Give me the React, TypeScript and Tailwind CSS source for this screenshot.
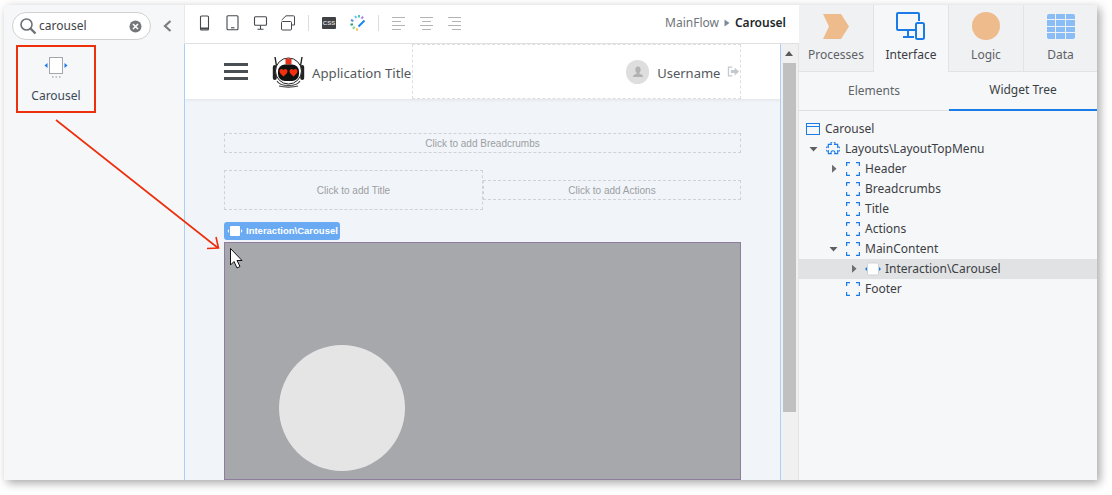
import React from "react";

const BLUE = "#1b7ce8";

function CarouselIcon() {
  return (
    <svg width="26" height="26" viewBox="0 0 26 26">
      <rect x="6.500" y="3.500" width="13" height="16" fill="#fff" stroke="#a3a7ab" />
      <path d="M4.500 9v5L1.500 11.500zM21.500 9v5l3-2.500z" fill={BLUE} />
      <path d="M9 23h1.500M12.500 23H14M16 23h1.500" stroke="#8d9195" strokeWidth="1" />
    </svg>
  );
}

function DashedIcon() {
  return (
    <svg width="14" height="14" viewBox="0 0 14 14" fill="none" stroke={BLUE} strokeWidth="1.200">
      <path d="M.6 4V.6H4M10 .6h3.400V4M.6 10v3.400H4M10 13.400h3.400V10" />
    </svg>
  );
}

function Caret({ open }: { open?: boolean }) {
  return open ? (
    <svg width="10" height="10" viewBox="0 0 10 10"><path d="M.5 3h8L4.500 7.500z" fill="#5f5f5f" /></svg>
  ) : (
    <svg width="10" height="10" viewBox="0 0 10 10"><path d="M3 .8v8L7.500 4.800z" fill="#6e6e6e" /></svg>
  );
}

function TreeRow({ pad, caret, icon, label, active, noCaret }: { pad: string; caret?: "open" | "closed"; icon: React.ReactNode; label: string; active?: boolean; noCaret?: boolean }) {
  return (
    <div className={`flex h-5 items-center text-[12px] text-[#3c4043] ${pad} ${active ? "bg-[#e1e2e4]" : ""}`}>
      {!noCaret && (
        <span className="flex w-5 justify-center pr-[5px]">{caret && <Caret open={caret === "open"} />}</span>
      )}
      <span className="flex w-[14px] items-center justify-center">{icon}</span>
      <span className="ml-[5px] whitespace-nowrap">{label}</span>
    </div>
  );
}

function Placeholder({ text, className }: { text: string; className: string }) {
  return (
    <div className={`flex items-center justify-center border border-dashed border-[#cfd3d6] font-['Liberation_Sans',sans-serif] text-[10px] text-[#9b9ea1] ${className}`}>
      {text}
    </div>
  );
}

function TopTab({ label, active, icon, last }: { label: string; active?: boolean; icon: React.ReactNode; last?: boolean }) {
  return (
    <div className={`flex flex-col items-center border-[#e2e3e5] ${last ? "flex-1" : "w-[75px] border-r"} ${active ? "bg-[#f6f7f9] text-[#3c3c44]" : "border-b bg-[#f0f1f3] text-[#5d6166]"}`}>
      <div className="flex h-[42px] items-center justify-center">{icon}</div>
      <div className="text-[12px] leading-[16px]">{label}</div>
    </div>
  );
}

function AlignIcon({ kind }: { kind: "left" | "center" | "right" }) {
  const d = {
    left: "M0 .5h13M0 4.500h9M0 8.500h13M0 12.500h9",
    center: "M0 .5h13M2 4.500h9M0 8.500h13M2 12.500h9",
    right: "M0 .5h13M4 4.500h9M0 8.500h13M4 12.500h9",
  }[kind];
  return (
    <svg width="13" height="13" viewBox="0 0 13 13"><path d={d} stroke="#b3b3b3" /></svg>
  );
}

function Toolbar() {
  return (
    <div className="flex h-[39px] shrink-0 items-center border-b border-l border-b-[#e0e0e0] border-l-[#e6e8ea] bg-white pb-[2px] pl-[12px] pr-[13px]">
      <div className="flex items-center gap-[13px]">
        <svg width="15" height="16" viewBox="0 0 15 16" fill="none" stroke="#45484c" strokeWidth="1.100">
          <rect x="3.500" y="1" width="8" height="14" rx="1" />
          <path d="M4 13.500h7" strokeWidth="2" />
        </svg>
        <svg width="15" height="16" viewBox="0 0 15 16" fill="none" stroke="#45484c" strokeWidth="1.100">
          <rect x="2" y=".8" width="11" height="14" rx="1" />
          <path d="M6 12.800h3.500" />
        </svg>
        <svg width="15" height="16" viewBox="0 0 15 16" fill="none" stroke="#45484c" strokeWidth="1.100">
          <rect x="1.500" y="1.800" width="12" height="8.500" rx="1" />
          <path d="M7.500 10.500V14M4.500 14.300h6" />
        </svg>
        <svg width="15" height="16" viewBox="0 0 15 16" fill="none" stroke="#45484c" strokeWidth="1">
          <rect x=".5" y="6.500" width="10" height="8.500" rx="1" />
          <path d="M.7 5 5 .8h7.500a1 1 0 0 1 1 1V10H11" />
        </svg>
      </div>
      <div className="ml-[12px] h-[16px] w-px bg-[#dcdcdc]" />
      <div className="ml-[13px] flex h-[12px] w-[14px] items-center justify-center rounded-[1px] bg-[#3f4144] font-['Liberation_Sans',sans-serif] text-[6px] font-bold text-[#d8d8d8]">
        CSS
      </div>
      <svg width="16" height="16" viewBox="0 0 16 16" className="ml-[14px]" fill="none" strokeWidth="2.600">
        <path d="M5 2.500 6.500 1.500" stroke="#58c2e8" />
        <path d="M8 1.300h2" stroke="#4fc6c0" />
        <path d="M11.500 2 13 3.200" stroke="#a684dc" />
        <path d="M2.500 4.500 1.800 6.500" stroke="#5f8fe0" />
        <path d="M1.500 8.500 2 10.500" stroke="#2aa06a" />
        <path d="M3 12 4.500 13.500" stroke="#8fd48a" />
        <path d="M6 14.500H8" stroke="#f0cd5c" />
        <path d="M8.500 11.500 14.500 5.500" stroke="#1b86ee" strokeWidth="2" />
      </svg>
      <div className="ml-[12px] h-[16px] w-px bg-[#dcdcdc]" />
      <div className="ml-[13px] flex items-center gap-[15px]">
        <AlignIcon kind="left" />
        <AlignIcon kind="center" />
        <AlignIcon kind="right" />
      </div>
      <div className="ml-auto flex items-center text-[12px]">
        <span className="text-[#6f7479]">MainFlow</span>
        <svg width="6" height="8" viewBox="0 0 6 8" className="mx-[5px]"><path d="M.5.5v7L5.500 4z" fill="#7d8a96" /></svg>
        <span className="font-semibold text-[#22262b]">Carousel</span>
      </div>
    </div>
  );
}

function RobotLogo() {
  return (
    <svg width="33" height="32" viewBox="0 0 33 32" className="ml-6">
      <path d="M4.500 10 3 1M28.500 10 30 1" stroke="#222" strokeWidth="1.400" />
      <rect x=".8" y="9" width="4" height="15" rx="2" fill="#222" />
      <rect x="28.200" y="9" width="4" height="15" rx="2" fill="#222" />
      <circle cx="16.500" cy="15" r="13" fill="#fff" stroke="#222" strokeWidth="1" />
      <rect x="13.500" y="2.500" width="6" height="6" fill="#e2311d" />
      <rect x="6" y="8.500" width="21" height="16.500" rx="7" fill="#111" />
      <path d="M11.500 14c-1.100-1.700-4-1.100-4 1.200 0 2.100 2.300 3.300 4 5.300 1.700-2 4-3.200 4-5.300 0-2.300-2.900-2.900-4-1.200zM21.500 14c-1.100-1.700-4-1.100-4 1.200 0 2.100 2.300 3.300 4 5.300 1.700-2 4-3.200 4-5.300 0-2.300-2.900-2.900-4-1.200z" fill="#f4300f" />
      <path d="M5 25c3 6 20 6 23 0M7 30c5 1.500 14 1.500 19 0" stroke="#444" strokeWidth="1.100" fill="none" />
    </svg>
  );
}

function AppHeader() {
  return (
    <div className="flex h-[55px] shrink-0 bg-white pl-[39px] shadow-[0_1px_3px_rgba(0,0,0,0.08)]">
      <div className="flex items-center">
        <div className="flex w-6 flex-col gap-[4px]">
          <div className="h-[3px] bg-[#4a4f54]" />
          <div className="h-[3px] bg-[#4a4f54]" />
          <div className="h-[3px] bg-[#4a4f54]" />
        </div>
        <RobotLogo />
        <span className="ml-[7px] w-[100px] whitespace-nowrap pt-[4px] text-[13.200px] text-[#54585c]">Application Title</span>
      </div>
      <div className="flex w-[329px] items-center border border-dashed border-[#dcdfe1] pl-[213px]">
        <div className="flex h-6 w-6 items-center justify-center rounded-full bg-[#dedede]">
          <svg width="14" height="14" viewBox="0 0 14 14"><path d="M7 1.500c1.800 0 2.700 1.400 2.700 3.200 0 1.300-.6 2.500-1.300 3v1.100c1.800.6 3.600 1.200 3.600 2.700v.5H2v-.5c0-1.500 1.800-2.100 3.600-2.700V7.700c-.7-.5-1.300-1.700-1.300-3C4.300 2.900 5.200 1.500 7 1.500z" fill="#b2b2b2" /></svg>
        </div>
        <span className="ml-[8px] pt-[4px] text-[13px] text-[#54585c]">Username</span>
        <svg width="13" height="12" viewBox="0 0 13 12" className="ml-[7px]">
          <path d="M5.500 1H1.500v9h4" stroke="#c4c9cd" fill="none" strokeWidth="1.300" />
          <path d="M4 4h4V1.500L12.500 5.500 8 9.500V7H4z" fill="#c4c9cd" />
        </svg>
      </div>
    </div>
  );
}

function Canvas() {
  return (
    <div className="flex min-h-0 flex-1">
      <div className="flex min-w-0 flex-1 flex-col overflow-hidden border-x border-[#abd0f7] bg-[#f1f5f9]">
        <AppHeader />
        <div className="flex flex-1 flex-col pl-[39px] pr-[39px] pt-[34px]">
          <Placeholder text="Click to add Breadcrumbs" className="h-5 w-[517px] shrink-0" />
          <div className="mt-[17px] flex h-10 w-[517px] shrink-0 items-center">
            <Placeholder text="Click to add Title" className="h-10 w-[259px]" />
            <Placeholder text="Click to add Actions" className="h-5 flex-1" />
          </div>
          <div className="mt-3 flex h-[18px] w-[116px] shrink-0 items-center rounded-[3px] bg-[#69aaf3] pl-[3px] font-['Liberation_Sans',sans-serif] text-[9.500px] font-bold text-white">
            <svg width="16" height="12" viewBox="0 0 16 12" className="mr-[3px]">
              <rect x="3" y="1" width="10" height="10" rx="1" fill="#fff" />
              <path d="M2 4v4L.5 6zM14 4v4l1.500-2z" fill="#fff" />
            </svg>
            Interaction\Carousel
          </div>
          <div className="mt-[2px] flex w-[517px] flex-1 border border-[#8f7d9f] bg-[#a7a8ab] pl-[54px] pt-[102px]">
            <div className="h-[126px] w-[126px] shrink-0 rounded-full bg-[#e5e5e5]" />
          </div>
        </div>
      </div>
      <div className="flex w-[18px] shrink-0 flex-col items-center border-r border-[#e4e4e4] bg-[#f0f0f0] pr-px pt-[7px]">
        <svg width="8" height="5" viewBox="0 0 8 5"><path d="M0 5h8L4 0z" fill="#5a5a5a" /></svg>
        <div className="mt-[7px] h-[349px] w-[13px] bg-[#c0c0c0]" />
      </div>
    </div>
  );
}

function LeftPanel() {
  return (
    <div className="flex w-[180px] shrink-0 flex-col bg-[#f6f7f9] pl-2 pt-[7px]">
      <div className="flex items-center">
        <div className="flex h-[28px] w-[139px] items-center rounded-full border border-[#cfd1d3] bg-white pl-[6px] pr-[8px]">
          <svg width="18" height="18" viewBox="0 0 18 18" fill="none" stroke="#6f7275">
            <circle cx="7.500" cy="7.500" r="5.500" strokeWidth="1.600" />
            <path d="M11.500 11.500 16.500 16.500" strokeWidth="2.400" />
          </svg>
          <span className="ml-[2px] flex-1 text-[12px] text-[#3f4346]">carousel</span>
          <svg width="13" height="13" viewBox="0 0 13 13">
            <circle cx="6.500" cy="6.500" r="6" fill="#75787b" />
            <path d="M4 4l5 5M9 4l-5 5" stroke="#fff" strokeWidth="1.600" />
          </svg>
        </div>
        <svg width="9" height="12" viewBox="0 0 9 12" className="ml-3" fill="none"><path d="M7.500 1 2 6l5.500 5" stroke="#7a7d80" strokeWidth="2.200" /></svg>
      </div>
      <div className="ml-1 mt-[5px] flex h-[68px] w-[80px] flex-col items-center border-2 border-[#ee2f0c] pt-[7px]">
        <CarouselIcon />
        <span className="mt-[8px] text-[12px] leading-4 text-[#3c4a56]">Carousel</span>
      </div>
    </div>
  );
}

function RightPanel() {
  return (
    <div className="flex w-[298px] shrink-0 flex-col bg-[#f6f7f9]">
      <div className="flex h-[67px] shrink-0">
        <TopTab label="Processes" icon={<svg width="28" height="25" viewBox="0 0 28 25"><path d="M1 0h18l8 12.500L19 25H1l6-12.500z" fill="#edbb8c" /></svg>} />
        <TopTab label="Interface" active icon={
          <svg width="30" height="28" viewBox="0 0 30 28" fill="none" stroke={BLUE} strokeWidth="2">
            <path d="M19 18H2a1 1 0 0 1-1-1V2a1 1 0 0 1 1-1h20a1 1 0 0 1 1 1v7" />
            <path d="M12 18v6M7 25h11" />
            <rect x="20" y="11" width="8" height="16" rx="1.500" />
          </svg>
        } />
        <TopTab label="Logic" icon={<div className="h-7 w-7 rounded-full bg-[#edbb8c]" />} />
        <TopTab label="Data" last icon={
          <div className="grid h-[25px] w-7 grid-cols-3 grid-rows-4 gap-px overflow-hidden rounded-[2px]">
            {Array.from({ length: 12 }).map((_, i) => (
              <div key={i} className="bg-[#8abcf6]" />
            ))}
          </div>
        } />
      </div>
      <div className="flex h-[39px] shrink-0 items-center border-b border-[#e0e0e0] text-[12px]">
        <div className="flex h-full w-[150px] items-center justify-center text-[#5f6468]">Elements</div>
        <div className="flex h-[39px] flex-1 items-center justify-center border-b-2 border-[#1b7ce8] text-[#3a3f44]">Widget Tree</div>
      </div>
      <div className="pt-2">
        <TreeRow pad="pl-[7px]" noCaret icon={
          <svg width="14" height="12" viewBox="0 0 14 12" fill="none" stroke={BLUE}><rect x=".5" y=".5" width="13" height="11" /><path d="M.5 3.500h13" /></svg>
        } label="Carousel" />
        <TreeRow pad="pl-[7px]" caret="open" icon={
          <svg width="14" height="14" viewBox="1 1 12 12" fill="none" stroke={BLUE}><path d="M3 3H5.500a1.700 1.700 0 1 1 3 0H11V5.500a1.700 1.700 0 1 1 0 3V11H8.500a1.700 1.700 0 1 0-3 0H3V8.500a1.700 1.700 0 1 1 0-3z" /></svg>
        } label="Layouts\LayoutTopMenu" />
        <TreeRow pad="pl-[27px]" caret="closed" icon={<DashedIcon />} label="Header" />
        <TreeRow pad="pl-[27px]" icon={<DashedIcon />} label="Breadcrumbs" />
        <TreeRow pad="pl-[27px]" icon={<DashedIcon />} label="Title" />
        <TreeRow pad="pl-[27px]" icon={<DashedIcon />} label="Actions" />
        <TreeRow pad="pl-[27px]" caret="open" icon={<DashedIcon />} label="MainContent" />
        <TreeRow pad="pl-[47px]" caret="closed" active icon={
          <svg width="16" height="14" viewBox="0 0 16 14" className="shrink-0">
            <rect x="2.500" y="1" width="11" height="12" rx="1" fill="#fff" stroke="#d0d2d4" />
            <path d="M2 5v4L0 7zM14 5v4l2-2z" fill={BLUE} />
          </svg>
        } label="Interaction\Carousel" />
        <TreeRow pad="pl-[27px]" icon={<DashedIcon />} label="Footer" />
      </div>
    </div>
  );
}

export default function App() {
  return (
    <div className="relative h-[495px] w-[1112px] overflow-hidden bg-white pl-1 pt-[5px] font-['Noto_Sans',sans-serif]">
      <div className="flex h-[475px] w-[1093px] overflow-hidden shadow-[3px_3px_9px_rgba(0,0,0,0.35)]">
        <LeftPanel />
        <div className="flex w-[615px] shrink-0 flex-col">
          <Toolbar />
          <Canvas />
        </div>
        <RightPanel />
      </div>
      {/* annotation arrow and cursor lie over the page */}
      <svg width="260" height="300" viewBox="0 0 260 300" fill="none" className="absolute left-0 top-0">
        <path d="M56 120 218 248M207 248.500 218.500 248 216 237" stroke="#ee2f0c" strokeWidth="1.600" />
        <path d="M230.500 248.500V265l3.500-3.500 3 6.500 3-1.500-3-6h5z" fill="#fff" stroke="#111" />
      </svg>
    </div>
  );
}
